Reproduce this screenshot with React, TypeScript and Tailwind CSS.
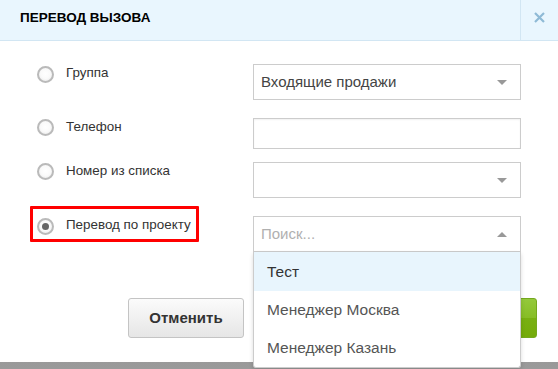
import React from "react";

function Radio({ checked }: { checked?: boolean }) {
  return (
    <div className="w-[17px] h-[17px] rounded-full border-[2px] border-[#bababa] bg-[radial-gradient(circle_at_50%_45%,#ffffff_0%,#fafafa_50%,#e4e4e4_100%)] flex items-center justify-center shrink-0">
      {checked && <div className="w-[7px] h-[7px] rounded-full bg-[#666666]" />}
    </div>
  );
}

function Arrow({ up }: { up?: boolean }) {
  return (
    <svg width="10" height="5" viewBox="0 0 10 5" className="shrink-0">
      {up ? <path d="M0 5 L5 0 L10 5 Z" fill="#999" /> : <path d="M0 0 L10 0 L5 5 Z" fill="#999" />}
    </svg>
  );
}

export default function App() {
  const font = { fontFamily: '"Liberation Sans", Arial, sans-serif' };
  return (
    <div className="w-[558px] h-[369px] overflow-hidden relative bg-[linear-gradient(#6a6a6a,#9a9a9a)]" style={font}>
      <div className="bg-white h-[362px] flex flex-col">
        {/* Header */}
        <div className="h-[41px] bg-[#e9f6fe] border-b border-[#d2e6f3] flex items-stretch shrink-0">
          <div className="flex-1 flex items-center pl-[20px] text-[13.5px] font-bold text-black pb-[4px]">
            ПЕРЕВОД ВЫЗОВА
          </div>
          <div className="w-[38px] border-l border-[#d2e6f3] flex items-center justify-center pb-[5px]">
            <svg width="11" height="11" viewBox="0 0 11 11">
              <path d="M1 1 L10 10 M10 1 L1 10" stroke="#8fbad6" strokeWidth="2.2" />
            </svg>
          </div>
        </div>

        {/* Body */}
        <div className="flex flex-col pt-[23px] text-[13.4px] text-[#333]">
          {/* Row 1 */}
          <div className="flex items-start">
            <div className="w-[253px] pl-[37px] pt-[2px] flex items-center gap-[12px] h-[18px]">
              <Radio />
              <span className="-mt-[1px]">Группа</span>
            </div>
            <div className="w-[268px] h-[36px] border border-[#cccccc] flex items-center justify-between pl-[7px] pr-[13px]">
              <span className="text-[15px] text-[#444]">Входящие продажи</span>
              <Arrow />
            </div>
          </div>

          {/* Row 2 */}
          <div className="flex items-start mt-[18px]">
            <div className="w-[253px] pl-[37px] pt-[1px] flex items-center gap-[12px] h-[18px]">
              <Radio />
              <span className="-mt-[1px]">Телефон</span>
            </div>
            <div className="w-[268px] h-[31px] border border-[#cccccc] shadow-[inset_0_1px_2px_rgba(0,0,0,0.06)]" />
          </div>

          {/* Row 3 */}
          <div className="flex items-start mt-[13px]">
            <div className="w-[253px] pl-[37px] pt-[1px] flex items-center gap-[12px] h-[18px]">
              <Radio />
              <span className="-mt-[1px]">Номер из списка</span>
            </div>
            <div className="w-[268px] h-[36px] border border-[#cccccc] flex items-center justify-end pr-[13px]">
              <Arrow />
            </div>
          </div>

          {/* Row 4 */}
          <div className="flex items-start mt-[18px]">
            <div className="w-[253px] pl-[37px] pt-[2px] flex items-center gap-[12px] h-[18px] relative">
              <Radio checked />
              <span className="-mt-[1px]">Перевод по проекту</span>
              <div className="absolute left-[30px] top-[-10px] w-[169px] h-[36px] border-[3px] border-[#ff0000] rounded-[1px]" />
            </div>
            <div className="w-[268px] relative">
              <div className="h-[36px] border border-[#cccccc] flex items-center justify-between pl-[7px] pr-[13px]">
                <span className="text-[15px] text-[#b0b0b0]">Поиск...</span>
                <Arrow up />
              </div>
              <div className="absolute left-0 top-[36px] w-[268px] bg-white border border-t-0 border-[#cccccc] rounded-b-[3px] shadow-[0_2px_4px_rgba(0,0,0,0.15)] z-10 text-[15.5px] text-[#555]">
                <div className="h-[39px] bg-[#e8f5fd] flex items-center pl-[13px] text-[#333]">Тест</div>
                <div className="h-[38px] flex items-center pl-[13px]">Менеджер Москва</div>
                <div className="h-[38px] flex items-center pl-[13px]">Менеджер Казань</div>
              </div>
            </div>
          </div>
        </div>

        {/* Footer */}
        <div className="flex items-center mt-[46px] pl-[128px] pr-[21px]">
          <div className="w-[116px] h-[40px] rounded-[3px] border border-[#c4c4c4] bg-[linear-gradient(#fbfbfb,#e6e6e6)] flex items-center justify-center text-[15px] font-bold text-[#333]">
            Отменить
          </div>
          <div className="ml-auto w-[150px] h-[40px] rounded-[3px] border border-[#74a81e] bg-[linear-gradient(#94c93b,#86bd25_50%,#78b012_51%,#74ab0a)]" />
        </div>
      </div>
    </div>
  );
}
